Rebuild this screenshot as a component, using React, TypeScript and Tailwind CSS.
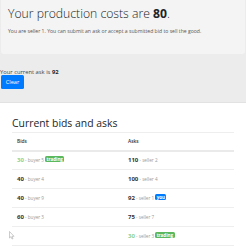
import React from "react";

type Entry = { value: number; who: string; badge?: "trading" | "you" };

const bids: (Entry | null)[] = [
  { value: 30, who: "buyer 5", badge: "trading" },
  { value: 40, who: "buyer 4" },
  { value: 40, who: "buyer 9" },
  { value: 60, who: "buyer 3" },
  null,
];

const asks: Entry[] = [
  { value: 110, who: "seller 2" },
  { value: 100, who: "seller 4" },
  { value: 92, who: "seller 1", badge: "you" },
  { value: 75, who: "seller 7" },
  { value: 30, who: "seller 3", badge: "trading" },
];

function Cell({ e }: { e: Entry | null }) {
  if (!e) return <td className="p-0 pl-[5px] text-[6px] leading-[9px]" />;
  return (
    <td className="p-0 pl-[5px] align-middle text-[6px] leading-[9px]">
      <span
        className={
          "text-[6px] font-bold " + (e.badge === "trading" ? "text-[#8fd18f]" : "text-[#333]")
        }
      >
        {e.value}
      </span>
      <span className="text-[4.6px] text-[#999]"> - {e.who}</span>
      {e.badge === "trading" && (
        <span className="ml-[1px] inline-block rounded-[1.5px] bg-[#5cb85c] px-[1.5px] align-[0.5px] text-[4.5px] font-bold leading-[6px] text-white">
          trading
        </span>
      )}
      {e.badge === "you" && (
        <span className="ml-[1px] inline-block rounded-[1.5px] bg-[#007bff] px-[1.5px] align-[0.5px] text-[4.5px] font-bold leading-[6px] text-white">
          you
        </span>
      )}
    </td>
  );
}

export default function App() {
  return (
    <div className="relative h-[246px] w-[246px] overflow-hidden bg-white font-['Open_Sans',sans-serif] text-[#212529]">
      {/* Top section */}
      <div className="h-[103px] border-b border-[#e2e2e2] bg-[#ececec]">
        <div className="mx-[1px] h-[54px] rounded-b-[3px] bg-[#f4f4f4] px-[7px] pt-[4px]">
          <h1 className="text-[12.2px] font-light leading-[20px]">
            Your production costs are <b className="font-bold">80</b>.
          </h1>
          <p className="mt-[4px] text-[5.1px] leading-[6px] text-[#555]">
            You are seller 1. You can submit an ask or accept a submitted bid to sell the good.
          </p>
        </div>
        <div className="mt-[15px] text-[5.8px] leading-[6px] text-[#444]">
          Your current ask is <b className="font-bold text-[#222]">92</b>
        </div>
        <button className="ml-[1px] mt-[0px] flex h-[14px] w-[23px] items-center justify-center rounded-[1.5px] bg-[#007bff] text-[5.6px] text-white">
          Clear
        </button>
      </div>

      {/* Bids and asks */}
      <div className="px-[12px] pt-[13px]">
        <h2 className="text-[10.4px] leading-[14px]">Current bids and asks</h2>
        <table className="mt-[2px] w-full table-fixed border-collapse">
          <thead>
            <tr className="h-[18px] border-t border-b-2 border-t-[#eeeeee] border-b-[#eaeaea]">
              <th className="p-0 pl-[5px] text-left text-[4.8px] font-semibold leading-[8px] text-[#333]">Bids</th>
              <th className="p-0 pl-[5px] text-left text-[4.8px] font-semibold leading-[8px] text-[#333]">Asks</th>
            </tr>
          </thead>
          <tbody>
            {asks.map((a, i) => (
              <tr key={i} className="h-[19px] border-b border-[#eeeeee]">
                <Cell e={bids[i]} />
                <Cell e={a} />
              </tr>
            ))}
          </tbody>
        </table>
      </div>

      {/* mouse cursor */}
      <svg className="absolute left-[9px] top-[231px]" width="6" height="9" viewBox="0 0 6 9">
        <path d="M0.5 0.5 L0.5 7 L2 5.6 L3 8 L4 7.6 L3 5.3 L5 5.3 Z" fill="#fff" stroke="#aaa" strokeWidth="0.6" />
      </svg>
    </div>
  );
}
